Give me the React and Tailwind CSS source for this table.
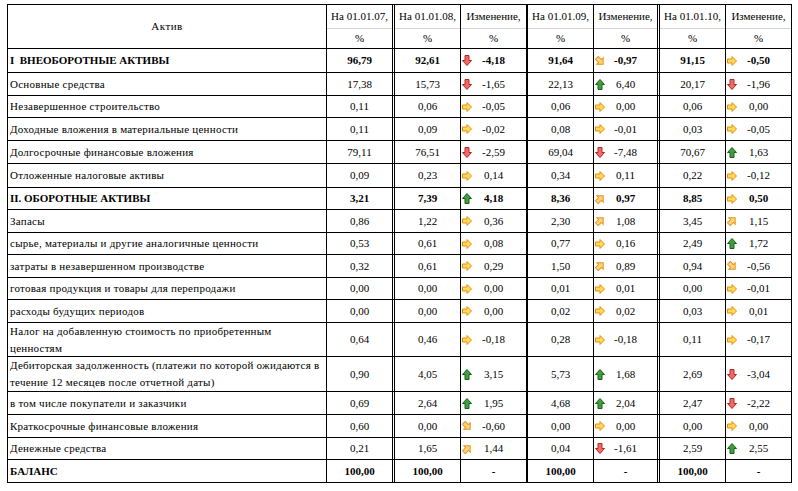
const ROWS = [
  { name: ["I  ВНЕОБОРОТНЫЕ АКТИВЫ"], bold: true, h: "h-[24px]", v: ["96,79", "92,61", ["down", "-4,18"], "91,64", ["dr", "-0,97"], "91,15", ["right", "-0,50"]] },
  { name: ["Основные средства"], h: "h-[23px]", v: ["17,38", "15,73", ["down", "-1,65"], "22,13", ["up", "6,40"], "20,17", ["down", "-1,96"]] },
  { name: ["Незавершенное строительство"], h: "h-[22px]", v: ["0,11", "0,06", ["right", "-0,05"], "0,06", ["right", "0,00"], "0,06", ["right", "0,00"]] },
  { name: ["Доходные вложения в материальные ценности"], h: "h-[23px]", v: ["0,11", "0,09", ["right", "-0,02"], "0,08", ["right", "-0,01"], "0,03", ["right", "-0,05"]] },
  { name: ["Долгосрочные финансовые вложения"], h: "h-[23px]", v: ["79,11", "76,51", ["down", "-2,59"], "69,04", ["down", "-7,48"], "70,67", ["up", "1,63"]] },
  { name: ["Отложенные налоговые активы"], h: "h-[24px]", v: ["0,09", "0,23", ["right", "0,14"], "0,34", ["right", "0,11"], "0,22", ["right", "-0,12"]] },
  { name: ["II. ОБОРОТНЫЕ АКТИВЫ"], bold: true, h: "h-[22px]", v: ["3,21", "7,39", ["up", "4,18"], "8,36", ["ur", "0,97"], "8,85", ["right", "0,50"]] },
  { name: ["Запасы"], h: "h-[23px]", v: ["0,86", "1,22", ["right", "0,36"], "2,30", ["ur", "1,08"], "3,45", ["ur", "1,15"]] },
  { name: ["сырье, материалы и другие аналогичные ценности"], h: "h-[22px]", v: ["0,53", "0,61", ["right", "0,08"], "0,77", ["right", "0,16"], "2,49", ["up", "1,72"]] },
  { name: ["затраты в незавершенном производстве"], h: "h-[23px]", v: ["0,32", "0,61", ["right", "0,29"], "1,50", ["ur", "0,89"], "0,94", ["dr", "-0,56"]] },
  { name: ["готовая продукция и товары для перепродажи"], h: "h-[22px]", v: ["0,00", "0,00", ["right", "0,00"], "0,01", ["right", "0,01"], "0,00", ["right", "-0,01"]] },
  { name: ["расходы будущих периодов"], h: "h-[23px]", v: ["0,00", "0,00", ["right", "0,00"], "0,02", ["right", "0,02"], "0,03", ["right", "0,01"]] },
  { name: ["Налог на добавленную стоимость по приобретенным", "ценностям"], h: "h-[34px]", v: ["0,64", "0,46", ["right", "-0,18"], "0,28", ["right", "-0,18"], "0,11", ["right", "-0,17"]] },
  { name: ["Дебиторская задолженность (платежи по которой ожидаются в", "течение 12 месяцев после отчетной даты)"], h: "h-[35px]", v: ["0,90", "4,05", ["up", "3,15"], "5,73", ["up", "1,68"], "2,69", ["down", "-3,04"]] },
  { name: ["в том числе покупатели и заказчики"], h: "h-[23px]", v: ["0,69", "2,64", ["up", "1,95"], "4,68", ["up", "2,04"], "2,47", ["down", "-2,22"]] },
  { name: ["Краткосрочные финансовые вложения"], h: "h-[23px]", v: ["0,60", "0,00", ["dr", "-0,60"], "0,00", ["right", "0,00"], "0,00", ["right", "0,00"]] },
  { name: ["Денежные средства"], h: "h-[22px]", v: ["0,21", "1,65", ["ur", "1,44"], "0,04", ["down", "-1,61"], "2,59", ["up", "2,55"]] },
  { name: ["БАЛАНС"], bold: true, h: "h-[23px]", v: ["100,00", "100,00", "-", "100,00", "-", "100,00", "-"] },
]

// width + right border of every numeric column
const COLS = [
  "w-[68px] border-r-[3px] border-double border-black",
  "w-[66px] border-r border-black",
  "w-[67px] border-r-2 border-black",
  "w-[66px] border-r border-black",
  "w-[66px] border-r-[3px] border-double border-black",
  "w-[66px] border-r border-black",
  "w-[66px] border-r border-black",
]

const HEAD = ["На 01.01.07,", "На 01.01.08,", "Изменение,", "На 01.01.09,", "Изменение,", "На 01.01.10,", "Изменение,"]

function Arrow({ type }) {
  if (type === "down")
    return (
      <svg width="10" height="11" viewBox="0 0 10 11">
        <path d="M3 0.5H7V5.5H9.5L5 10.5L0.5 5.5H3Z" fill="#ef6b6b" stroke="#b3261e" strokeWidth="1" />
      </svg>
    )
  if (type === "up")
    return (
      <svg width="10" height="11" viewBox="0 0 10 11">
        <path d="M3 10.5H7V5.5H9.5L5 0.5L0.5 5.5H3Z" fill="#3f9f3f" stroke="#1d5e1d" strokeWidth="1" />
      </svg>
    )
  const rot = type === "ur" ? "rotate(-45 5 5)" : type === "dr" ? "rotate(45 5 5)" : ""
  const light = type !== "right"
  return (
    <svg width="10" height="10" viewBox="0 0 10 10">
      <path
        d="M0.5 3H5V0.5L9.5 5L5 9.5V7H0.5Z"
        transform={rot}
        fill={light ? "#ffd27a" : "#ffd860"}
        stroke={light ? "#e2951f" : "#e58e00"}
        strokeWidth="1"
      />
    </svg>
  )
}

function Cell({ value, col, bold }) {
  if (Array.isArray(value)) {
    return (
      <div className={`${COLS[col]} flex items-center`}>
        <div className="w-[10px] ml-[1px] flex items-center">
          <Arrow type={value[0]} />
        </div>
        <span className={`flex-1 text-center ${bold ? "font-bold" : ""}`}>{value[1]}</span>
        <div className="w-[11px]" />
      </div>
    )
  }
  return <div className={`${COLS[col]} flex items-center justify-center ${bold ? "font-bold" : ""}`}>{value}</div>
}

export default function App() {
  return (
    <div className="w-[798px] h-[491px] bg-white pt-[4px] pl-[7px] text-[11px] text-black font-['Liberation_Serif','Times_New_Roman',serif]">
      <div className="w-[785px] border-l border-t border-black">
        <div className="flex h-[44px] border-b border-black">
          <div className="w-[319px] border-r border-black flex items-center justify-center tracking-[0.5px]">Актив</div>
          {HEAD.map((h, i) => (
            <div key={i} className={`${COLS[i]} flex flex-col`}>
              <div className="h-[24px] border-b border-[#d4d4d4] flex items-center justify-center whitespace-nowrap">{h}</div>
              <div className="flex-1 flex items-center justify-center">%</div>
            </div>
          ))}
        </div>
        {ROWS.map((r, i) => (
          <div key={i} className={`flex ${r.h} border-b border-black`}>
            <div
              className={`w-[319px] border-r border-black flex flex-col justify-center pl-[2px] leading-[17px] whitespace-pre ${
                r.bold ? "font-bold" : "tracking-[0.25px]"
              }`}
            >
              {r.name.map((l, j) => (
                <div key={j}>{l}</div>
              ))}
            </div>
            {r.v.map((v, j) => (
              <Cell key={j} value={v} col={j} bold={r.bold} />
            ))}
          </div>
        ))}
      </div>
    </div>
  )
}
